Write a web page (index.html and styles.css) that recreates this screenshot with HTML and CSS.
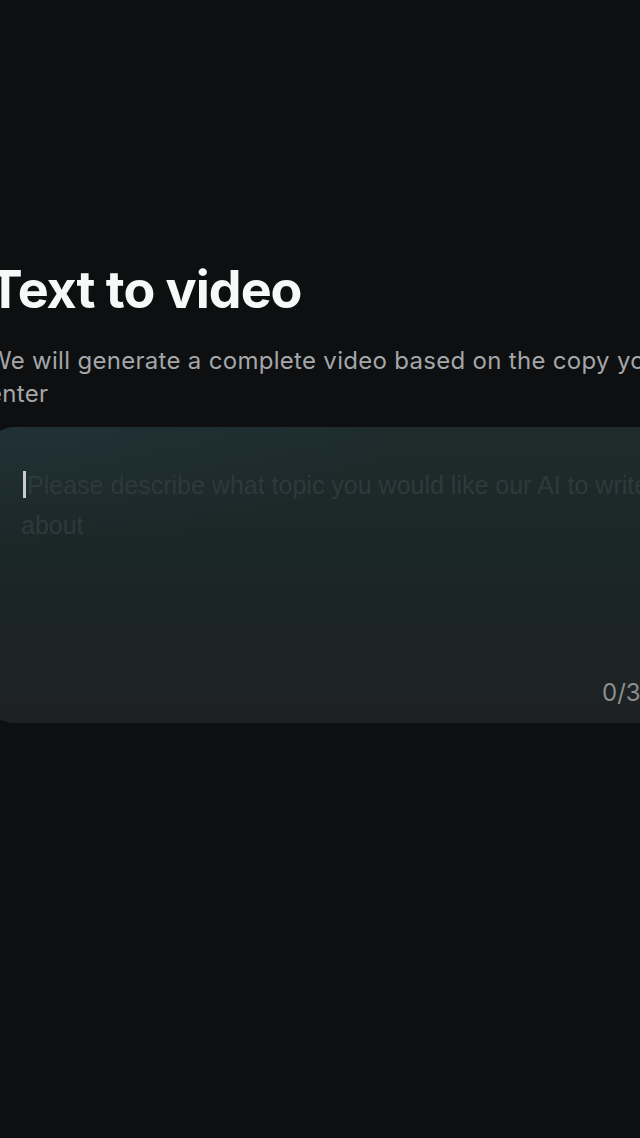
FILE: index.html
```html
<!DOCTYPE html>
<html lang="en">
<head>
<meta charset="utf-8">
<title>Text to video</title>
<link rel="stylesheet" href="styles.css">
</head>
<body>
<main class="page">
  <h1 class="title">Text to video</h1>
  <p class="subtitle">We will generate a complete video based on the copy you enter</p>
  <div class="card">
    <div class="input">
      <span class="caret"></span><span class="placeholder">Please describe what topic you would like our AI to write about</span>
    </div>
    <div class="counter">0/300</div>
  </div>
</main>
</body>
</html>
```
FILE: styles.css
```css
html, body {
  margin: 0;
  padding: 0;
  background: #0d0f11;
  overflow: hidden;
  height: 100%;
}
body {
  font-family: Inter, "Noto Sans", sans-serif;
}
.page {
  width: 700px;
  margin-left: -12px;
  padding-top: 256px;
}
.title {
  margin: 0;
  font-size: 52px;
  line-height: 68px;
  font-weight: 700;
  color: #f7f8f8;
  letter-spacing: -1px;
}
.subtitle {
  margin: 20px 0 0;
  font-size: 24px;
  line-height: 33px;
  color: #a4a6a8;
  letter-spacing: 0.3px;
  padding-right: 20px;
}
.card {
  margin-top: 17px;
  height: 296px;
  border-radius: 26px;
  background:
    radial-gradient(ellipse 60% 40% at 0% 0%, rgba(34, 52, 60, 0.6), rgba(34, 52, 60, 0) 100%),
    linear-gradient(180deg, #1e2c2c 0%, #1b2626 45%, #1e2122 100%);
  display: flex;
  flex-direction: column;
  justify-content: space-between;
  padding: 38px 0 16px 33px;
  box-sizing: border-box;
}
.input {
  font-family: "Liberation Sans", Arial, sans-serif;
  font-size: 25px;
  line-height: 40px;
  color: #2d3a3b;
  padding-right: 20px;
}
.caret {
  display: inline-block;
  width: 3px;
  height: 27px;
  background: #c8cccc;
  vertical-align: -4px;
  margin-left: 2px;
  margin-right: 1px;
}
.counter {
  align-self: flex-start;
  margin-left: 581px;
  font-size: 24px;
  color: #8a8f90;
}
```
